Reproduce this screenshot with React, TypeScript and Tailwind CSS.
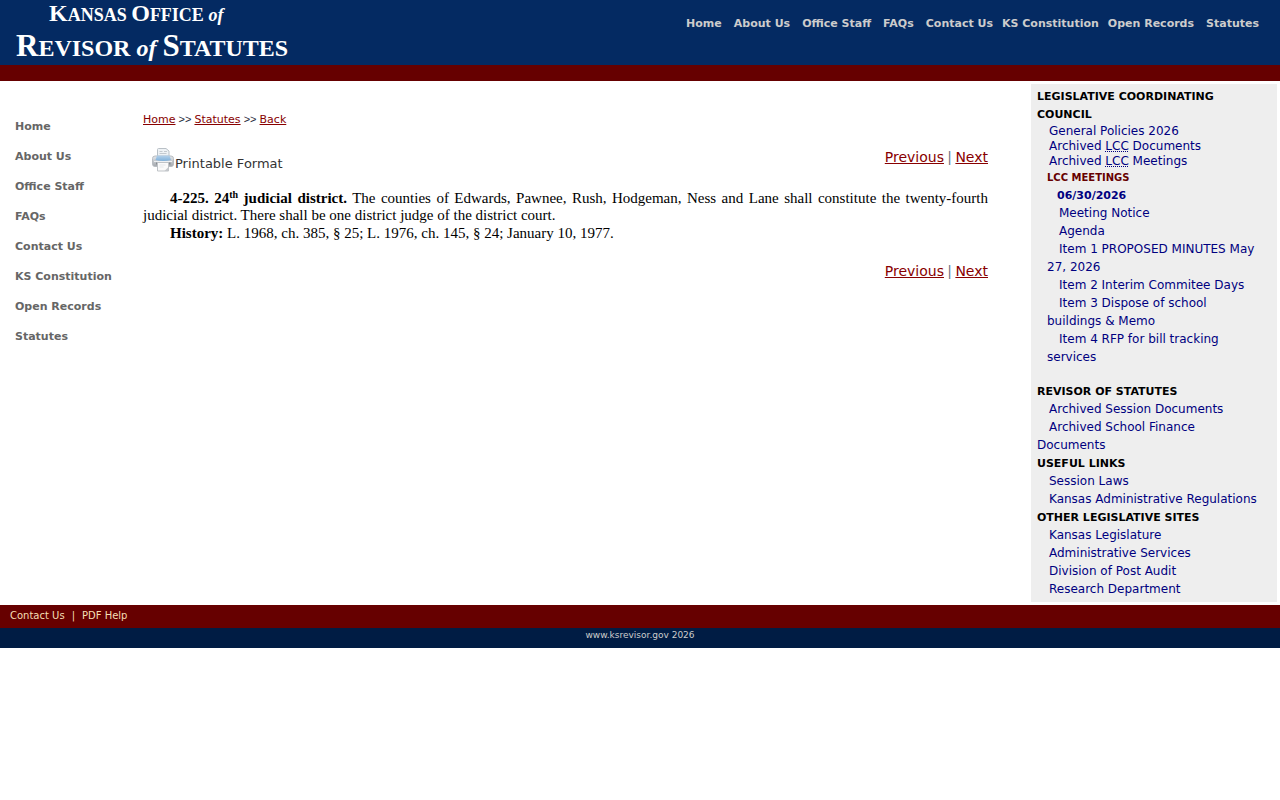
import clsx from "clsx";

const navItems = [
  "Home",
  "About Us",
  "Office Staff",
  "FAQs",
  "Contact Us",
  "KS Constitution",
  "Open Records",
  "Statutes",
];

const PrinterIcon = () => (
  <svg width="24" height="24" viewBox="0 0 24 24" aria-hidden="true">
    <defs>
      <linearGradient id="body" x1="0" y1="0" x2="0" y2="1">
        <stop offset="0" stopColor="#e4e8ec" />
        <stop offset="1" stopColor="#a3a7ac" />
      </linearGradient>
      <linearGradient id="tray" x1="0" y1="0" x2="0" y2="1">
        <stop offset="0" stopColor="#b4d1ea" />
        <stop offset="1" stopColor="#7fb0da" />
      </linearGradient>
    </defs>
    <path d="M6.5 1.5q0-1 1-1h7.500l3 2.500v7h-11.500z" fill="#eef2f5" stroke="#b9c0c6" />
    <path d="M8.500 3.500h3M13 3.500h3M8.500 5.500h7" stroke="#c3c9cf" />
    <rect x="1.500" y="8" width="21" height="10.500" rx="2.500" fill="url(#body)" stroke="#b9bdc2" />
    <path d="M6 7.500h12.500l1.500 4.500q-7.750 2-15.500 0z" fill="url(#tray)" />
    <path d="M3 13.500h18" stroke="#eef0f2" />
    <path d="M5 14.500h14.500v2h-14.500z" fill="#85898e" />
    <path d="M6.500 14.500h11v8.500h-11z" fill="#fafafa" stroke="#bfc3c7" />
    <path d="M8.500 17h6M8.500 19h4" stroke="#e4e7ea" />
    <path d="M13.500 23l4-4v4z" fill="#c4c7cb" />
  </svg>
);

const Logo = () => (
  <a href="#" className="block pl-4 font-['Liberation_Serif',serif] font-bold text-white">
    <span className="block pl-[33px] text-[18px] leading-[27px] whitespace-nowrap">
      <span className="text-[24px]">K</span>ANSAS <span className="text-[24px]">O</span>FFICE{" "}
      <i>of</i>
    </span>
    <span className="block text-[24px] leading-[33px] whitespace-nowrap">
      <span className="text-[31px]">R</span>EVISOR <i>of</i>{" "}
      <span className="text-[31px]">S</span>TATUTES
    </span>
  </a>
);

const Separator = ({ children }: { children: string }) => (
  <span className="font-['Liberation_Sans',sans-serif] whitespace-pre">{` ${children} `}</span>
);

const Pager = () => (
  <div className="text-right text-[14px] leading-[18px] text-gray-500">
    <a href="#" className="text-[#880000] underline">Previous</a>
    <Separator>|</Separator>
    <a href="#" className="text-[#880000] underline">Next</a>
  </div>
);

const SideHeading = ({ children }: { children: string }) => (
  <h2 className="text-[11px] leading-[18px] font-bold text-black">{children}</h2>
);

const SideLinks = ({ items }: { items: string[] }) => (
  <ul className="-mt-px mb-px">
    {items.map((item) => (
      <li key={item} className="indent-3 leading-[18px]">
        <a href="#">{item}</a>
      </li>
    ))}
  </ul>
);

const Lcc = () => (
  <abbr title="Legislative Coordinating Council">LCC</abbr>
);

const Sidebar = () => (
  <aside className="mt-[3px] mr-[3px] mb-[3px] w-[246px] shrink-0 bg-[#eeeeee] pt-1 pr-[14px] pb-[3px] pl-[6px] text-[12px] text-[#000080]">
    <SideHeading>LEGISLATIVE COORDINATING COUNCIL</SideHeading>
    <ul className="pl-3 leading-[15px]">
      <li><a href="#">General Policies 2026</a></li>
      <li><a href="#">Archived <Lcc /> Documents</a></li>
      <li><a href="#">Archived <Lcc /> Meetings</a></li>
    </ul>
    <div className="mb-[17px] pl-[10px]">
      <h3 className="text-[10px] leading-[18px] font-bold text-[#660000]">LCC MEETINGS</h3>
      <h4 className="pl-[10px] text-[11px] leading-[18px] font-bold">06/30/2026</h4>
      <SideLinks
        items={[
          "Meeting Notice",
          "Agenda",
          "Item 1 PROPOSED MINUTES May 27, 2026",
          "Item 2 Interim Commitee Days",
          "Item 3 Dispose of school buildings & Memo",
          "Item 4 RFP for bill tracking services",
        ]}
      />
    </div>
    <SideHeading>REVISOR OF STATUTES</SideHeading>
    <SideLinks items={["Archived Session Documents", "Archived School Finance Documents"]} />
    <SideHeading>USEFUL LINKS</SideHeading>
    <SideLinks items={["Session Laws", "Kansas Administrative Regulations"]} />
    <SideHeading>OTHER LEGISLATIVE SITES</SideHeading>
    <SideLinks
      items={[
        "Kansas Legislature",
        "Administrative Services",
        "Division of Post Audit",
        "Research Department",
      ]}
    />
  </aside>
);

export default function App() {
  return (
    <div className="bg-white font-['DejaVu_Sans',sans-serif] text-black">
      <header className="flex h-[81px] items-start justify-between border-b-16 border-[#660000] bg-[#042a62]">
        <Logo />
        <nav className="flex pt-[15px] pr-[15px] text-[11px] leading-[18px] font-bold text-[#cccccc]">
          {navItems.map((item) => (
            <a
              key={item}
              href="#"
              className={clsx("whitespace-nowrap", item === "KS Constitution" ? "px-[3px]" : "px-[6px]")}
            >
              {item}
            </a>
          ))}
        </nav>
      </header>

      <div className="flex">
        <nav className="w-[143px] shrink-0 pt-[31px] pl-[15px] text-[11px] leading-[30px] font-bold text-[#666666]">
          {navItems.map((item) => (
            <a key={item} href="#" className="block">{item}</a>
          ))}
        </nav>

        <main className="mr-[43px] flex-1 pt-[30px]">
          <div className="text-[11px] leading-4 text-gray-800">
            <a href="#" className="text-[#880000] underline">Home</a>
            <Separator>&gt;&gt;</Separator>
            <a href="#" className="text-[#880000] underline">Statutes</a>
            <Separator>&gt;&gt;</Separator>
            <a href="#" className="text-[#880000] underline">Back</a>
          </div>
          <div className="mt-5 flex items-start justify-between">
            <a href="#" className="flex pl-2 text-[13px] leading-8 text-[#333333]">
              <PrinterIcon />
              Printable Format
            </a>
            <Pager />
          </div>
          <div className="mt-[10px] space-y-px text-justify indent-[27px] font-['Liberation_Serif',serif] text-[15px] leading-[17px]">
            <p>
              <b>
                4-225. 24<sup className="text-[10px]">th</sup> judicial district.
              </b>{" "}
              The counties of Edwards, Pawnee, Rush, Hodgeman, Ness and Lane shall constitute the
              twenty-fourth judicial district. There shall be one district judge of the district court.
            </p>
            <p>
              <b>History:</b> L. 1968, ch. 385, § 25; L. 1976, ch. 145, § 24; January 10, 1977.
            </p>
          </div>
          <div className="mt-5">
            <Pager />
          </div>
        </main>

        <Sidebar />
      </div>

      <footer>
        <div className="flex bg-[#660000] px-[10px] pt-[2px] pb-[3px] text-[10px] leading-[18px] text-[#f5deb3]">
          <a href="#">Contact Us</a>
          <span className="px-[7px]">|</span>
          <a href="#">PDF Help</a>
        </div>
        <div className="bg-[#001c44] pb-[5px] text-center text-[9px] leading-[15px] text-[#cccccc]">
          www.ksrevisor.gov 2026
        </div>
      </footer>
    </div>
  );
}
